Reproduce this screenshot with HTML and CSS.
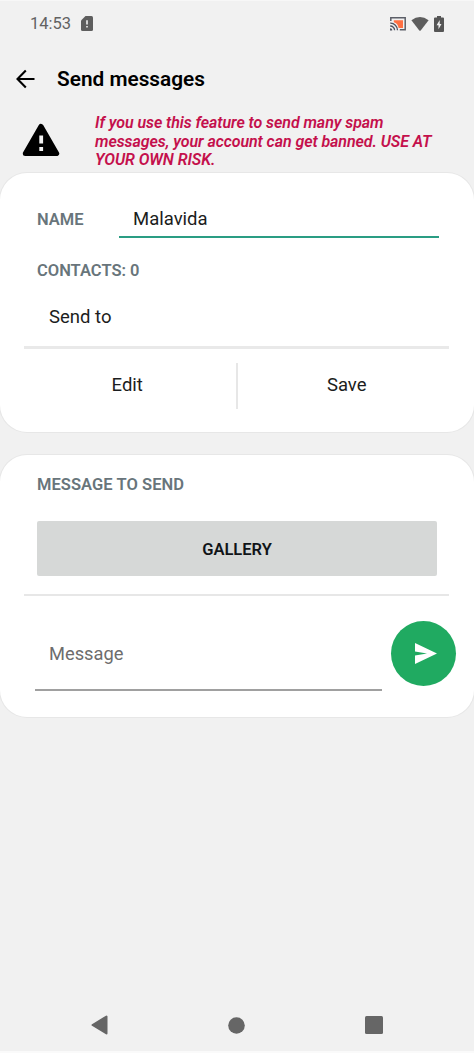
FILE: index.html
```
<!DOCTYPE html>
<html lang="en">
<head>
<meta charset="utf-8">
<title>Send messages</title>
<link rel="stylesheet" href="styles.css">
</head>
<body>
<div class="screen">
  <div class="status">
    <span class="clock">14:53</span>
    <svg class="sim" width="12" height="15" viewBox="0 0 12 15"><path d="M4.5 0H10.5Q12 0 12 1.5V13.5Q12 15 10.5 15H1.5Q0 15 0 13.5V4.5Z" fill="#5e5e5e"/><path d="M5.2 4.2h1.6v4.3H5.2zM5.2 10h1.6v1.6H5.2z" fill="#f1f1f1"/></svg>
    <div class="status-icons">
      <svg width="16" height="14" viewBox="0 0 16 14"><path d="M3.8 3.2H13V11H8.6Q8 6.5 3.8 5.2Z" fill="#ff7043"/><path d="M.8 4V.8H15.2V12.7H9.8" fill="none" stroke="#5c5f68" stroke-width="1.5"/><path d="M.2 6.2A7 7 0 0 1 7.5 13.3M.2 9A4.3 4.3 0 0 1 4.6 13.3" fill="none" stroke="#4f5360" stroke-width="1.3"/><path d="M0 11.2A2.2 2.2 0 0 1 2.2 13.6H0Z" fill="#4f5360"/></svg>
      <svg width="18" height="14" viewBox="0 0 18 14"><path d="M.4 3.2Q9-3 17.6 3.2L9.7 13.4Q9 14.3 8.3 13.4Z" fill="#5e5e5e"/></svg>
      <svg width="10" height="16" viewBox="0 0 10 16"><path d="M3 0H7V1.5H9Q10 1.5 10 2.5V15Q10 16 9 16H1Q0 16 0 15V2.5Q0 1.5 1 1.5H3Z" fill="#555"/><path d="M5.7 4L2.6 9.3H4.5V13.3L7.5 8H5.7Z" fill="#f1f1f1"/></svg>
    </div>
  </div>
  <header class="appbar">
    <svg width="20" height="20" viewBox="0 0 20 20"><path d="M18.5 10H2M9.8 1.5L1.5 10L9.8 18.5" fill="none" stroke="#000" stroke-width="2.1"/></svg>
    <h1>Send messages</h1>
  </header>
  <div class="warning">
    <svg width="38" height="34" viewBox="0 0 38 34"><path d="M19 3.3L34.7 30.5H3.3Z" fill="#000" stroke="#000" stroke-width="5" stroke-linejoin="round"/><path d="M17.3 12.5h3.8v8h-3.8zM17.3 24h3.8v4h-3.8z" fill="#f1f1f1"/></svg>
    <p>If you use this feature to send many spam<br>messages, your account can get banned. USE AT<br>YOUR OWN RISK.</p>
  </div>
  <main>
    <section class="card recipients">
      <div class="name-row"><label class="label">NAME</label><div class="name-field">Malavida</div></div>
      <div class="label contacts">CONTACTS: 0</div>
      <div class="send-to">Send to</div>
      <div class="actions"><span>Edit</span><span>Save</span></div>
    </section>
    <section class="card message">
      <div class="label heading">MESSAGE TO SEND</div>
      <div class="gallery">GALLERY</div>
      <div class="rule"></div>
      <div class="compose">
        <div class="message-field">Message</div>
        <div class="send"><svg width="22" height="21" viewBox="0 0 22 21"><path d="M0 0L22 10.5L0 21V12.6L12 10.5L0 8.4Z" fill="#fff"/></svg></div>
      </div>
    </section>
  </main>
  <nav class="navbar">
    <svg width="17" height="20" viewBox="0 0 17 20"><path d="M15.5 1.5V18.5L1.5 10Z" fill="#666" stroke="#666" stroke-width="2" stroke-linejoin="round"/></svg>
    <svg width="17" height="17" viewBox="0 0 17 17"><circle cx="8.5" cy="8.5" r="8.3" fill="#666"/></svg>
    <svg width="18" height="18" viewBox="0 0 18 18"><rect width="18" height="18" rx="1.5" fill="#666"/></svg>
  </nav>
</div>
</body>
</html>
```
FILE: styles.css
```
* { box-sizing: border-box; }
body { margin: 0; background: #f1f1f1; font-family: Roboto, "Liberation Sans", sans-serif; color: #1b1d20; }
svg { display: block; flex: none; }
.screen { width: 474px; height: 1053px; display: flex; flex-direction: column; background: #f1f1f1; border-top: 1px solid #f7f7f7; border-bottom: 2px solid #fafafa; }
.status { height: 47px; display: flex; align-items: center; padding: 0 30px 2px; color: #626262; }
.clock { font-size: 16.5px; line-height: 20px; width: 51px; }
.status-icons { display: flex; align-items: center; margin-left: auto; gap: 5px; }
.appbar { height: 62px; display: flex; align-items: center; gap: 21px; padding: 0 0 1px 16px; color: #000; }
.appbar h1 { margin: 0; font-size: 20.8px; line-height: 24px; font-weight: 600; white-space: nowrap; }
.warning { height: 63px; display: flex; align-items: flex-start; padding: 3px 0 0 22px; gap: 35px; }
.warning svg { margin-top: 10px; }
.warning p { margin: 1px 0 0; font-size: 16px; line-height: 18.5px; font-weight: 600; font-style: italic; letter-spacing: -0.07px; color: #c4104c; white-space: nowrap; }
.card { background: #fff; border-radius: 27px; box-shadow: 0 0 0 1px #e7e7e7; }
.recipients { height: 259px; padding-top: 28px; }
.label { font-size: 16.5px; line-height: 20px; font-weight: 600; color: #68757b; white-space: nowrap; }
.name-row { display: flex; height: 37px; padding: 0 35px 0 37px; align-items: flex-start; }
.name-row .label { width: 82px; padding-top: 9px; }
.name-field { flex: 1; height: 37px; border-bottom: 2px solid #2a9d83; padding: 8px 0 0 14px; font-size: 18.5px; line-height: 20px; }
.contacts { padding: 23px 0 0 37px; }
.send-to { height: 68px; margin: 0 25px 0 24px; padding: 26px 0 0 25px; border-bottom: 3px solid #e9e9e9; font-size: 18.5px; line-height: 20px; }
.actions { margin: 14px 18px 0 19px; height: 46px; display: grid; grid-template-columns: 1fr 1fr; font-size: 18.5px; line-height: 45px; text-align: center; }
.actions span:first-child { border-right: 2px solid #e7e7e7; }
.message { height: 262px; margin-top: 23px; padding-top: 20px; }
.heading { padding-left: 37px; letter-spacing: 0.06px; }
.gallery { margin: 26px 37px 0; height: 55px; border-radius: 2px; background: #d6d8d7; color: #101418; font-size: 16.5px; line-height: 57px; font-weight: 600; text-align: center; }
.rule { height: 2px; margin: 18px 25px 0 24px; background: #e7e7e7; }
.compose { display: flex; padding: 25px 18px 0 35px; justify-content: space-between; }
.message-field { width: 347px; height: 70px; border-bottom: 2px solid #a0a0a0; padding: 23px 0 0 14px; color: #6d6d6d; font-size: 18.3px; line-height: 20px; }
.send { width: 65px; height: 65px; border-radius: 50%; background: #20aa61; display: flex; align-items: center; justify-content: center; padding-left: 4px; }
.navbar { margin-top: auto; height: 52px; display: flex; align-items: center; justify-content: space-between; padding: 0 91px 0 91px; }
```
